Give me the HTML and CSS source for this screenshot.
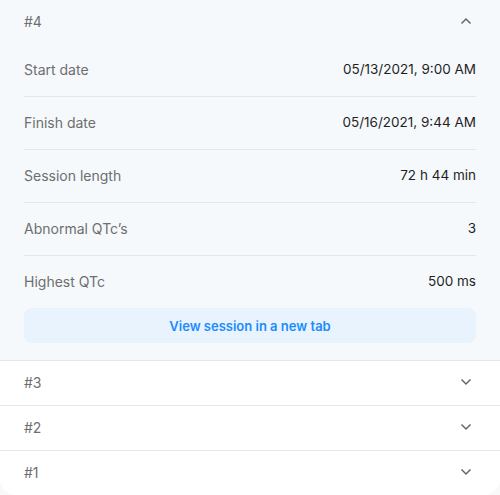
FILE: index.html
```html
<!DOCTYPE html>
<html>
<head>
<meta charset="utf-8">
<link rel="stylesheet" href="styles.css">
</head>
<body>
<div class="card">
  <section class="item open">
    <div class="head">
      <span class="title">#4</span>
      <svg class="chev" width="12" height="8" viewBox="0 0 12 8"><path d="M1.5 6.5 L6 2 L10.5 6.5" fill="none" stroke="#666" stroke-width="1.5"/></svg>
    </div>
    <div class="body">
      <div class="row"><span class="label">Start date</span><span class="value">05/13/2021, 9:00 AM</span></div>
      <div class="row"><span class="label">Finish date</span><span class="value">05/16/2021, 9:44 AM</span></div>
      <div class="row"><span class="label">Session length</span><span class="value">72 h 44 min</span></div>
      <div class="row"><span class="label">Abnormal QTc’s</span><span class="value">3</span></div>
      <div class="row last"><span class="label">Highest QTc</span><span class="value">500 ms</span></div>
      <button class="btn">View session in a new tab</button>
    </div>
  </section>
  <section class="item">
    <div class="head"><span class="title">#3</span>
      <svg class="chev" width="12" height="8" viewBox="0 0 12 8"><path d="M1.5 1.5 L6 6 L10.5 1.5" fill="none" stroke="#666" stroke-width="1.5"/></svg></div>
  </section>
  <section class="item">
    <div class="head"><span class="title">#2</span>
      <svg class="chev" width="12" height="8" viewBox="0 0 12 8"><path d="M1.5 1.5 L6 6 L10.5 1.5" fill="none" stroke="#666" stroke-width="1.5"/></svg></div>
  </section>
  <section class="item lastitem">
    <div class="head"><span class="title">#1</span>
      <svg class="chev" width="12" height="8" viewBox="0 0 12 8"><path d="M1.5 1.5 L6 6 L10.5 1.5" fill="none" stroke="#666" stroke-width="1.5"/></svg></div>
  </section>
</div>
</body>
</html>
```
FILE: styles.css
```css
html, body {
  margin: 0;
  padding: 0;
  background: #f9f9f9;
}
body {
  font-family: Inter, "Noto Sans", sans-serif;
  font-size: 14px;
  color: #222;
}
.card {
  width: 500px;
  height: 495px;
  background: #fff;
  border-radius: 0 0 16px 16px;
  overflow: hidden;
}
.item {
  border-bottom: 1px solid #e6e6e6;
}
.item.lastitem {
  border-bottom: none;
}
.item.open {
  background: #f6f9fc;
}
.head {
  height: 44px;
  box-sizing: border-box;
  padding: 0 28px 2px 24px;
  display: flex;
  align-items: center;
  justify-content: space-between;
}
.title {
  color: #6e6e6e;
  font-size: 14px;
}
.chev {
  display: block;
}
.body {
  padding: 0 24px 17px;
}
.row {
  height: 50px;
  padding-bottom: 2px;
  display: flex;
  align-items: center;
  justify-content: space-between;
  border-bottom: 1px solid #e4e6e9;
}
.row.last {
  border-bottom: none;
}
.label {
  color: #6e6e6e;
}
.value {
  color: #1f1f1f;
  font-size: 13.5px;
}
.btn {
  display: block;
  width: 100%;
  height: 35px;
  border: none;
  border-radius: 8px;
  background: #e8f3fd;
  color: #1a8cff;
  font-family: Inter, "Noto Sans", sans-serif;
  font-size: 13px;
  font-weight: 600;
  cursor: pointer;
}
```
